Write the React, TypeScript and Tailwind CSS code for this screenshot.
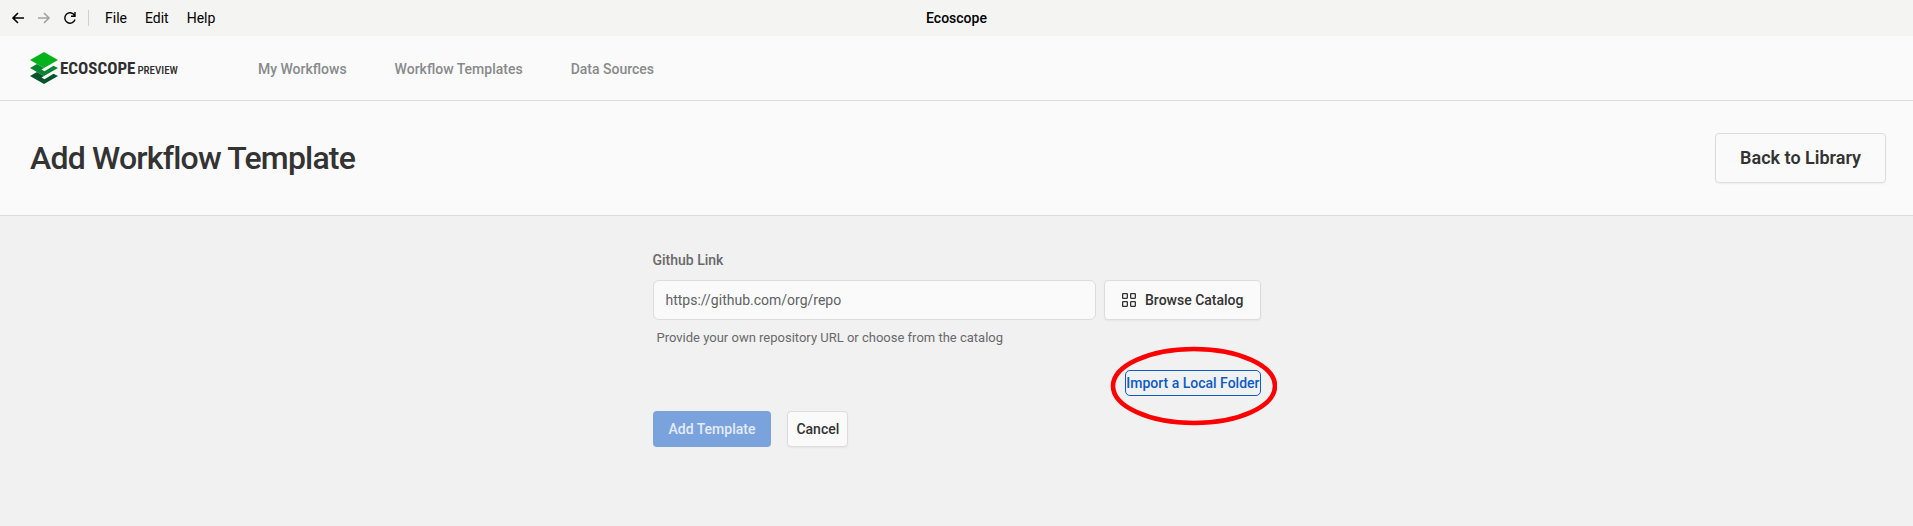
import React from "react";

const navLinks = ["My Workflows", "Workflow Templates", "Data Sources"];

function Logo() {
  return (
    <a href="#" className="flex items-center gap-0.5 text-[#2f2f31]">
      <svg width="28" height="32" viewBox="0 0 28 32" aria-hidden="true">
        <path d="M0 24 7 20 14 24 11.500 25.500 14.500 27.200 23.500 21.800 28 24 14 32Z" fill="#04542c" />
        <path d="M0 16 7 12 14 16 11.500 17.500 14.500 19.200 23.500 13.800 28 16 14 24Z" fill="#078430" />
        <path d="M14 0 28 8 14 16 0 8Z" fill="#04b31c" />
      </svg>
      <span className="flex items-baseline gap-0.5 font-['Roboto_Condensed','Liberation_Sans_Narrow',sans-serif]">
        <span className="text-[17px] leading-6 font-bold">ECOSCOPE</span>
        <span className="text-[11px] font-medium">PREVIEW</span>
      </span>
    </a>
  );
}

export default function App() {
  return (
    <div className="flex min-h-screen flex-col bg-[#f1f1f1] font-[Roboto,sans-serif] text-sm text-[#333333]">
      {/* Window title bar */}
      <div className="grid h-9 grid-cols-[1fr_auto_1fr] items-center bg-[#f4f4f2] px-[11px] text-black">
        <div className="flex items-center">
          <button aria-label="Back" className="mr-3">
            <svg width="14" height="14" viewBox="0 0 14 14" fill="none" stroke="currentColor" strokeWidth="1.6">
              <path d="M13 7H2M7 2 2 7l5 5" />
            </svg>
          </button>
          <button aria-label="Forward" className="mr-3 text-[#a3a3a2]">
            <svg width="14" height="14" viewBox="0 0 14 14" fill="none" stroke="currentColor" strokeWidth="1.6">
              <path d="M1 7h11M7 2l5 5-5 5" />
            </svg>
          </button>
          <button aria-label="Reload" className="mr-[11px]">
            <svg width="14" height="14" viewBox="0 0 14 14" fill="none" stroke="currentColor" strokeWidth="1.4">
              <path d="M12 8.500A5.200 5.200 0 1 1 11.500 4.300M12 1v4.200H8" />
            </svg>
          </button>
          <div className="mr-4 h-4 w-px bg-[#d0d0ce]" />
          <div className="flex gap-[18px]">
            <button>File</button>
            <button>Edit</button>
            <button>Help</button>
          </div>
        </div>
        <div className="font-medium">Ecoscope</div>
      </div>

      <header className="flex h-[65px] items-center border-b border-[#dcdcdc] bg-[#fafafa] px-[30px]">
        <Logo />
        <nav className="ml-20 flex gap-12 pt-0.5 font-medium text-[#888a8c]">
          {navLinks.map((link) => (
            <a key={link} href="#">{link}</a>
          ))}
        </nav>
      </header>

      <div className="flex items-center justify-between border-b border-[#dcdcdc] bg-[#fafafa] py-8 pr-[27px] pl-[30px]">
        <h1 className="text-[32px] leading-10 font-medium tracking-tight">Add Workflow Template</h1>
        <button className="h-[50px] rounded border border-[#dcdcdc] px-6 text-lg font-semibold shadow-xs">
          Back to Library
        </button>
      </div>

      <main className="mx-auto w-full max-w-[608px] pt-[34px]">
        <form>
          <label htmlFor="github-link" className="block font-medium text-[#68696b]">Github Link</label>
          <div className="mt-2.5 flex gap-2">
            <input
              id="github-link"
              type="text"
              placeholder="https://github.com/org/repo"
              className="h-10 min-w-0 flex-1 rounded-md border border-[#dcdcdc] bg-[#fafafa] px-3 placeholder:text-[#606264]"
            />
            <button type="button" className="flex h-10 items-center gap-2 rounded border border-[#dcdcdc] bg-[#fafafa] px-4 font-medium shadow-xs">
              <svg width="16" height="16" viewBox="0 0 16 16" fill="none" stroke="currentColor" strokeWidth="1.3" aria-hidden="true">
                <rect x="1.650" y="1.650" width="4.700" height="4.700" rx="0.500" />
                <rect x="9.650" y="1.650" width="4.700" height="4.700" rx="0.500" />
                <rect x="1.650" y="9.650" width="4.700" height="4.700" rx="0.500" />
                <rect x="9.650" y="9.650" width="4.700" height="4.700" rx="0.500" />
              </svg>
              Browse Catalog
            </button>
          </div>
          <p className="mt-2 pl-1 text-[13px] leading-5 text-[#68696b]">
            Provide your own repository URL or choose from the catalog
          </p>
          <div className="mt-[22px] flex justify-end">
            <div className="relative">
              <button type="button" className="h-[26px] rounded-[5px] border border-[#0c5bc7] font-medium text-[#0c5bc7]">
                Import a Local Folder
              </button>
              <svg
                className="pointer-events-none absolute -top-6 -left-4"
                width="168"
                height="80"
                viewBox="0 0 168 80"
                fill="none"
                aria-hidden="true"
              >
                <ellipse cx="85" cy="40" rx="81" ry="37" stroke="#ff0000" strokeWidth="4.600" />
              </svg>
            </div>
          </div>
          <div className="mt-[15px] flex gap-4">
            <button type="submit" disabled className="h-9 rounded bg-[#7aa3de] px-4 font-medium text-[#e3ebf7]">
              Add Template
            </button>
            <button type="button" className="h-9 rounded border border-[#dcdcdc] bg-[#fafafa] px-2 font-medium shadow-xs">
              Cancel
            </button>
          </div>
        </form>
      </main>
    </div>
  );
}
